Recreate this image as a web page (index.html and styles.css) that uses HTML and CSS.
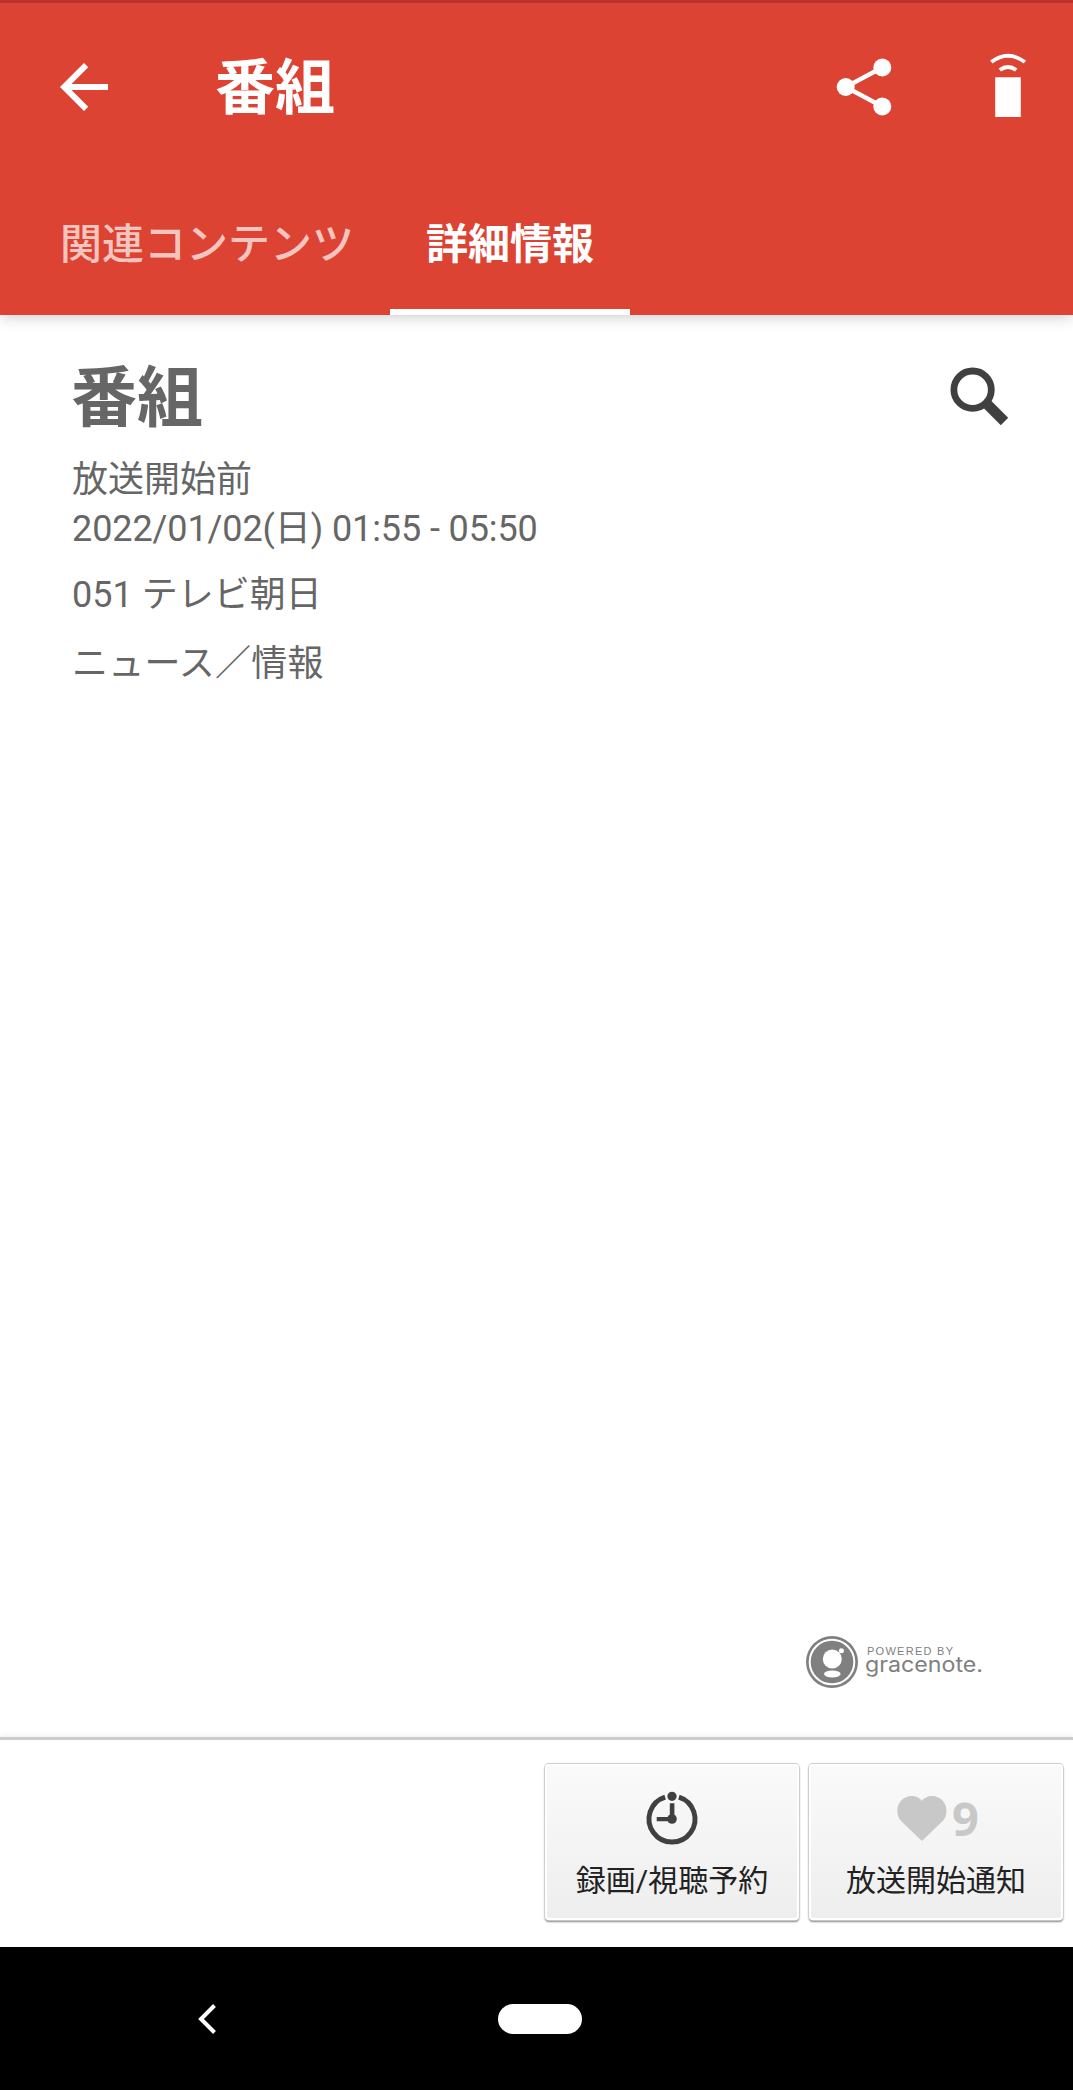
FILE: index.html
```html
<!DOCTYPE html>
<html lang="ja">
<head>
<meta charset="utf-8">
<title>番組</title>
<link rel="stylesheet" href="styles.css">
</head>
<body>
<div class="screen">
  <header class="app-bar">
    <div class="toolbar">
      <svg class="back" width="72" height="72" viewBox="0 0 24 24"><path fill="#fff" d="M20 11H7.83l5.59-5.59L12 4l-8 8 8 8 1.41-1.41L7.83 13H20z"/></svg>
      <h1 class="toolbar-title">番組</h1>
      <svg class="share" width="72" height="72" viewBox="828 51 72 72" fill="#fff"><path d="M882.3 67.5 845.7 87l36.6 19.5" fill="none" stroke="#fff" stroke-width="4.4"/><circle cx="845.7" cy="87" r="9"/><circle cx="882.3" cy="67.5" r="9"/><circle cx="882.3" cy="106.5" r="9"/></svg>
      <svg class="remote" width="72" height="72" viewBox="972 51 72 72" fill="none" stroke="#fff" stroke-width="3.8"><path fill="#fff" stroke="none" d="M995.2 77.2h25.6V117h-25.6z"/><path d="M999.8 70q8.2-6 16.4 0M991.3 62q16.7-12.4 33.6 0"/></svg>
    </div>
    <nav class="tabs">
      <a class="tab">関連コンテンツ</a>
      <a class="tab active">詳細情報</a>
    </nav>
  </header>
  <main class="content">
    <div class="heading">
      <h2 class="program-title">番組</h2>
      <svg width="72" height="72" viewBox="942 358 72 72" fill="none" stroke="#404040"><circle cx="972.6" cy="388.7" r="18.7" stroke-width="6.8"/><path d="m985.5 401.5 19 19" stroke-width="10.5"/></svg>
    </div>
    <p class="status">放送開始前</p>
    <p class="date">2022/01/02(日) 01:55 - 05:50</p>
    <p class="channel">051 テレビ朝日</p>
    <p class="genre">ニュース／情報</p>
    <svg class="credit" width="180" height="54" viewBox="805 1635 180 54">
      <circle cx="832" cy="1662" r="26" fill="#808080"/>
      <circle cx="832" cy="1662" r="22.3" fill="none" stroke="#fff" stroke-width="2"/>
      <circle cx="832.3" cy="1659" r="9.5" fill="#fff"/>
      <circle cx="841.4" cy="1650.7" r="2.5" fill="#fff"/>
      <ellipse cx="832.3" cy="1674" rx="8.3" ry="3.4" fill="#fff"/>
      <text class="credit-small" x="867" y="1654.5" textLength="86">POWERED BY</text>
      <text class="credit-name" x="865" y="1672" textLength="118" lengthAdjust="spacingAndGlyphs">gracenote.</text>
    </svg>
  </main>
  <footer class="actions">
    <button class="action">
      <span class="action-icon"><svg width="60" height="60" viewBox="642 1787 60 60" fill="#404040"><path d="M678.9 1797.1a23 23 0 1 1-13.8 0" fill="none" stroke="#404040" stroke-width="4.9"/><circle cx="672" cy="1796.3" r="4.6"/><circle cx="672" cy="1819" r="4.8"/><path d="M669.8 1803.3h4.6V1819h-4.6zM656.7 1816.9H672v4.3h-15.3z"/></svg></span>
      <span class="action-label">録画/視聴予約</span>
    </button>
    <button class="action">
      <span class="action-icon liked"><svg width="57" height="60" viewBox="895 1787 57 60"><path fill="#c8c8c8" d="M921.9 1841 901.6 1821.6C898.7 1818.8 897.3 1814.7 897.3 1811C897.3 1802.5 903.7 1796.1 911.7 1796.1C915.7 1796.1 919.5 1797.8 921.9 1800.7C924.3 1797.8 928.1 1796.1 932.1 1796.1C940.1 1796.1 946.5 1802.5 946.5 1811C946.5 1814.7 945.1 1818.8 942.2 1821.6Z"/></svg><b class="count">9</b></span>
      <span class="action-label">放送開始通知</span>
    </button>
  </footer>
  <div class="system-nav">
    <svg class="nav-back" width="30" height="36" viewBox="192 2001 30 36"><path d="m214.5 2005.5-13.5 13.5 13.5 13.5" fill="none" stroke="#fff" stroke-width="4"/></svg>
    <span class="home-pill"></span>
  </div>
</div>
</body>
</html>
```
FILE: styles.css
```css
* { box-sizing: border-box; }
body { margin: 0; background: #fff; font-family: Roboto, "Noto Sans CJK JP", sans-serif; }
h1, h2, p { margin: 0; }
svg { display: block; flex: none; }
.screen { width: 1073px; height: 2090px; display: flex; flex-direction: column; overflow: hidden; }

.app-bar { height: 315px; flex: none; background: #dc4333; border-top: 3px solid #bb312e; box-shadow: 0 2px 14px rgba(0, 0, 0, .2); }
.toolbar { height: 168px; display: flex; align-items: center; padding: 0 29px 0 48px; }
.toolbar-title { flex: 1; margin-left: 95px; padding-top: 4px; font-size: 60px; line-height: 84px; font-weight: 700; color: #fff; }
.remote { margin-left: 72px; }
.tabs { height: 144px; display: flex; padding-left: 24px; }
.tab { padding: 0 36px; font-size: 42px; line-height: 148px; font-weight: 500; color: rgba(255, 255, 255, .7); }
.active { font-weight: 700; color: #fff; border-bottom: 6px solid #fff; }

.content { height: 1422px; flex: none; padding: 38px 59px 0 72px; color: #666; font-size: 36px; display: flex; flex-direction: column; }
.heading { height: 90px; display: flex; justify-content: space-between; align-items: flex-start; }
.heading svg { margin-top: 6px; }
.program-title { margin-left: -1px; padding-top: 2px; font-size: 66px; line-height: 88px; font-weight: 700; }
.status, .date { line-height: 50px; height: 50px; }
.status { margin-top: 12px; }
.date { margin-top: -1px; letter-spacing: -.1px; }
.channel, .genre { line-height: 52px; height: 52px; }
.channel { margin-top: 15px; }
.genre { margin-top: 17px; letter-spacing: .2px; }
.credit { margin: auto 29px 48px auto; }
.credit text { fill: #808080; font-family: "Liberation Sans", sans-serif; }
.credit .credit-small { font-size: 11px; }
.credit .credit-name { font-family: Inter, sans-serif; font-size: 21px; font-weight: 400; }

.actions { height: 210px; flex: none; display: flex; justify-content: flex-end; gap: 10px; padding: 24px 10px 0 0; border-top: 3px solid #ccc; box-shadow: 0 -2px 5px rgba(0, 0, 0, .05); }
.action { width: 254px; height: 156px; padding: 23px 0 0; display: flex; flex-direction: column; align-items: center; border: 2px solid #fff; border-radius: 4px; background: linear-gradient(#fafafa, #eee); box-shadow: 0 0 1px 1px #ccc, 0 2px 2px #888; font: inherit; color: #222; }
.action-icon { height: 56px; display: flex; align-items: center; }
.liked { padding-left: 2px; }
.action-label { margin-top: 14px; font-size: 30px; line-height: 44px; white-space: nowrap; }
.count { padding-top: 1px; font: 700 47px/60px "Noto Sans", sans-serif; color: #c8c8c8; }

.system-nav { height: 143px; flex: none; display: flex; align-items: center; padding-left: 192px; background: #000; }
.home-pill { width: 84px; height: 30px; margin-left: 276px; border-radius: 15px; background: #fff; }
```
